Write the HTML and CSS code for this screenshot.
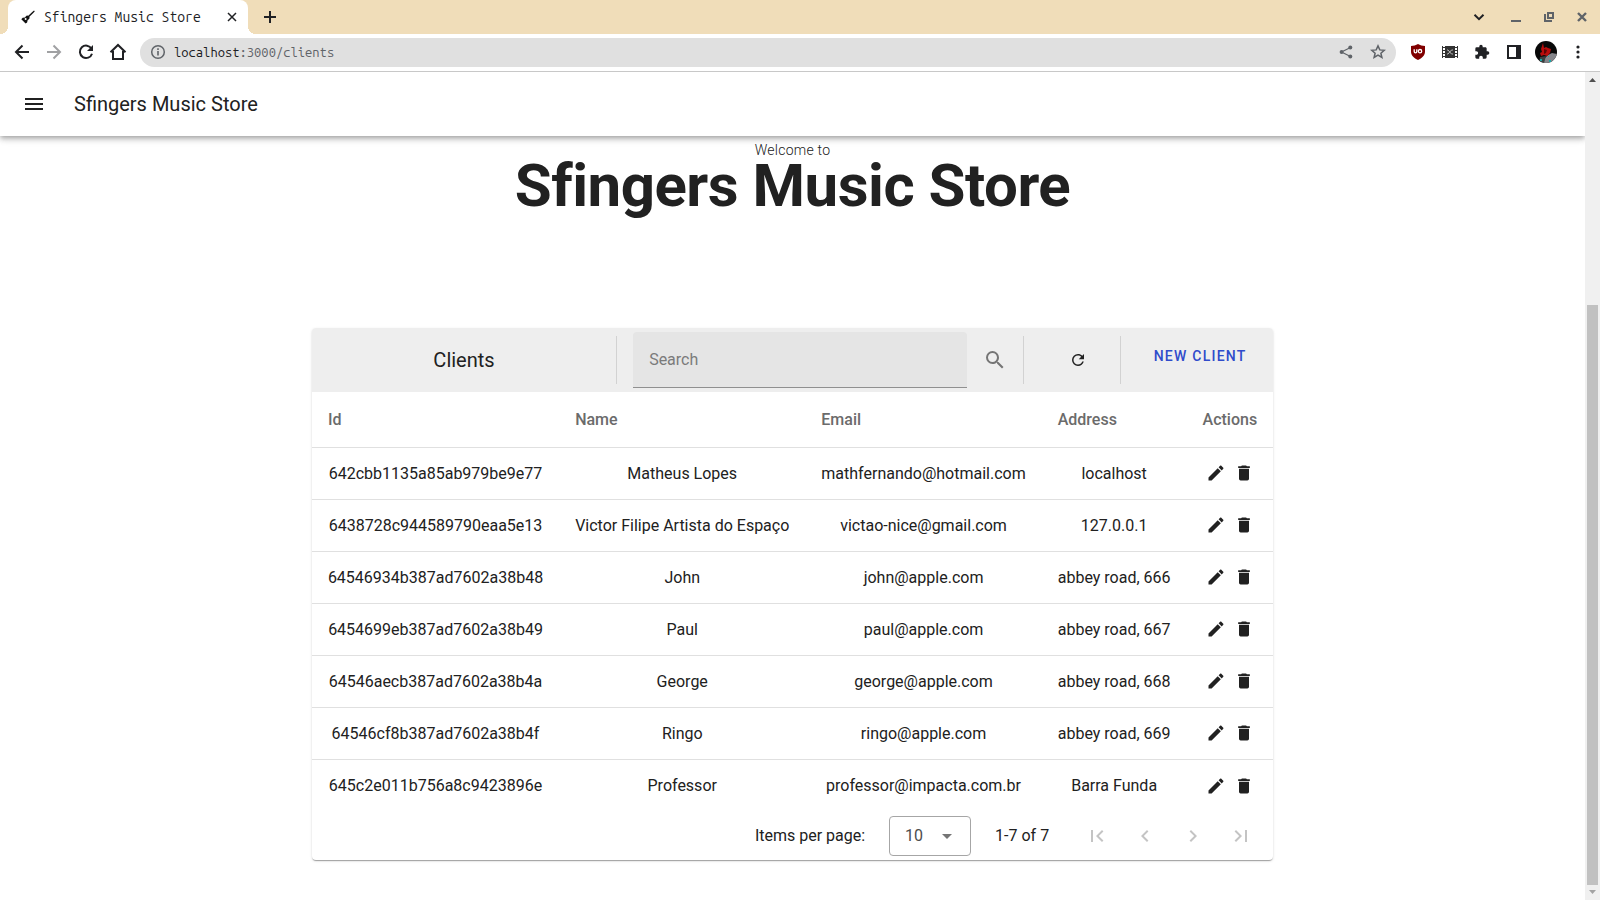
FILE: index.html
```html
<!DOCTYPE html>
<html lang="en">
<head>
<meta charset="utf-8">
<title>Sfingers Music Store</title>
<link rel="stylesheet" href="styles.css">
</head>
<body>
<svg class="sprite" aria-hidden="true">
  <symbol id="i-pencil" viewBox="0 0 24 24"><path d="M20.71,7.04C21.1,6.65 21.1,6 20.71,5.63L18.37,3.29C18,2.9 17.35,2.9 16.96,3.29L15.12,5.12L18.87,8.87M3,17.25V21H6.75L17.81,9.93L14.06,6.18L3,17.25Z"/></symbol>
  <symbol id="i-delete" viewBox="0 0 24 24"><path d="M19,4H15.5L14.5,3H9.5L8.5,4H5V6H19M6,19A2,2 0 0,0 8,21H16A2,2 0 0,0 18,19V7H6V19Z"/></symbol>
  <symbol id="i-refresh" viewBox="0 0 24 24"><path d="M17.65,6.35C16.2,4.9 14.21,4 12,4A8,8 0 0,0 4,12A8,8 0 0,0 12,20C15.73,20 18.84,17.45 19.73,14H17.65C16.83,16.33 14.61,18 12,18A6,6 0 0,1 6,12A6,6 0 0,1 12,6C13.66,6 15.14,6.69 16.22,7.78L13,11H20V4L17.65,6.35Z"/></symbol>
</svg>

<header class="browser">
  <div class="tabstrip">
    <div class="tab">
      <svg class="favicon" viewBox="0 0 14 14"><path d="M13 .4l.8.8-1.3 1.5-4.1 4 .2 1.5-1 1.2-.9.5-.6 2.5-1.5 1.2L.3 9.3l1.4-1.5 2.4-.4.6-1 1.2-.9 1.4.2 4.2-4z"/><circle cx="4.6" cy="9" r="1" fill="#fff"/></svg>
      <span class="tab-title">Sfingers Music Store</span>
      <button class="chrome-btn tab-close" aria-label="Close tab"><svg width="10" height="10" viewBox="0 0 10 10"><path class="line" d="M1 1l8 8M9 1L1 9"/></svg></button>
    </div>
    <button class="chrome-btn tab-new" aria-label="New tab"><svg width="12" height="12" viewBox="0 0 12 12"><path class="line thick" d="M6 0v12M0 6h12"/></svg></button>
    <div class="window-controls">
      <button class="chrome-btn tab-search" aria-label="Search tabs"><svg width="12" height="12" viewBox="0 0 12 12"><path class="line thick" d="M1.500 3.800L6 8.200l4.500-4.400"/></svg></button>
      <button class="chrome-btn dim" aria-label="Minimize"><svg width="12" height="12" viewBox="0 0 12 12"><path d="M1 9h10v2H1z"/></svg></button>
      <button class="chrome-btn dim" aria-label="Restore"><svg width="12" height="12" viewBox="0 0 12 12"><path fill-rule="evenodd" d="M4 1h7v7H4zM6 3v3h3V3zM1 3h2v6h6v2H1z"/></svg></button>
      <button class="chrome-btn dim" aria-label="Close window"><svg width="12" height="12" viewBox="0 0 12 12"><path class="line heavy" d="M2 2l8 8M10 2l-8 8"/></svg></button>
    </div>
  </div>
  <div class="navbar">
    <button class="chrome-btn" aria-label="Back"><svg width="16" height="16" viewBox="0 0 16 16"><path class="line thick" d="M15 8H2M8.500 1.500L2 8l6.500 6.500"/></svg></button>
    <button class="chrome-btn faded" aria-label="Forward"><svg width="16" height="16" viewBox="0 0 16 16"><path class="line thick" d="M1 8h13M7.500 1.500L14 8l-6.500 6.500"/></svg></button>
    <button class="chrome-btn" aria-label="Reload"><svg width="16" height="16" viewBox="0 0 16 16"><path class="line thick" d="M13.500 4.800A6.200 6.200 0 1 0 14 9.700"/><path d="M15 1v6H9z"/></svg></button>
    <button class="chrome-btn" aria-label="Home"><svg width="18" height="18" viewBox="0 0 18 18"><path class="line thick" d="M1.500 9.300L9 2l7.500 7.300M4 8v8h10V8"/></svg></button>
    <div class="omnibox">
      <svg class="info" width="16" height="16" viewBox="0 0 16 16"><circle class="line" cx="8" cy="8" r="6.300"/><path d="M7.200 7h1.600v4.500H7.200zM7.200 4.300h1.600v1.600H7.200z"/></svg>
      <div class="url"><b>localhost</b>:3000/clients</div>
      <button class="chrome-btn dim" aria-label="Share"><svg width="14" height="14" viewBox="0 0 14 14"><path class="line thin" d="M11.500 2.500L2.500 7l9 4.500"/><circle cx="11.300" cy="2.500" r="2"/><circle cx="2.600" cy="7" r="2"/><circle cx="11.300" cy="11.500" r="2"/></svg></button>
      <button class="chrome-btn dim" aria-label="Bookmark"><svg width="16" height="16" viewBox="0 0 16 16"><path class="line" d="M8 1.900l1.800 4 4.400.4-3.300 2.900 1 4.300L8 11.200l-3.900 2.300 1-4.300-3.300-2.900 4.400-.4z"/></svg></button>
    </div>
    <button class="chrome-btn" aria-label="Ad blocker"><svg width="16" height="16" viewBox="0 0 16 16"><path fill="#800000" d="M8 0c2 1.300 4.500 2 7 2v5.500c0 4-3 6.500-7 8.500-4-2-7-4.500-7-8.500V2c2.500 0 5-.7 7-2z"/><path fill="none" stroke="#fff" stroke-width="1.300" d="M4.200 5.200v2.400a1.300 1.300 0 0 0 2.600 0V5.200"/><circle cx="10" cy="7.200" r="1.700" fill="none" stroke="#fff" stroke-width="1.300"/></svg></button>
    <button class="chrome-btn" aria-label="Video extension"><svg width="16" height="14" viewBox="0 0 16 14"><path fill="#333" d="M3 1h10v12H3z"/><path fill="none" stroke="#333" d="M.5 1v12M15.500 1v12M0 2.500h3M0 5.500h3M0 8.500h3M0 11.500h3M13 2.500h3M13 5.500h3M13 8.500h3M13 11.500h3"/><path fill="none" stroke="#bbb" d="M5 5h1l3.500 4H11M5 9h1l3.500-4H11"/></svg></button>
    <button class="chrome-btn" aria-label="Extensions"><svg width="16" height="16" viewBox="0 0 24 24"><path d="M20.500,11H19V7C19,5.890 18.100,5 17,5H13V3.500A2.500,2.500 0 0,0 10.500,1A2.500,2.500 0 0,0 8,3.500V5H4A2,2 0 0,0 2,7V10.800H3.500C5,10.800 6.200,12 6.200,13.500C6.200,15 5,16.200 3.500,16.200H2V20A2,2 0 0,0 4,22H7.800V20.500C7.800,19 9,17.800 10.500,17.800C12,17.800 13.200,19 13.200,20.500V22H17A2,2 0 0,0 19,20V16H20.500A2.500,2.500 0 0,0 23,13.500A2.500,2.500 0 0,0 20.500,11Z"/></svg></button>
    <button class="chrome-btn" aria-label="Side panel"><svg width="14" height="14" viewBox="0 0 14 14"><path fill-rule="evenodd" d="M0 0h14v14H0zM2 2v10h7V2z"/></svg></button>
    <button class="chrome-btn" aria-label="Profile"><svg width="22" height="22" viewBox="0 0 22 22"><clipPath id="disc"><circle cx="11" cy="11" r="11"/></clipPath><g clip-path="url(#disc)"><path fill="#080808" d="M0 0h22v22H0z"/><path fill="#85858a" d="M13 14l4-2 5 1v9H8l2-5z"/><path fill="#3a3f40" d="M5 16l6-1-2 7H4z"/><path fill="#b80c0c" d="M8 2l1 5 2-1 2 1 3 1-1 4-3 3-3-1-3 1-1-3 2-1-1-3z"/><path fill="#5c0505" d="M9 8l3 1-1 3-2 1z"/><path fill="#19a7a7" d="M5 18h2v2H5zM14 19h2v2h-2zM13 15h1v1h-1z"/></g></svg></button>
    <button class="chrome-btn" aria-label="Menu"><svg width="4" height="14" viewBox="0 0 4 14"><circle cx="2" cy="2" r="1.600"/><circle cx="2" cy="7" r="1.600"/><circle cx="2" cy="12" r="1.600"/></svg></button>
  </div>
</header>

<div class="viewport">
  <div class="page">
    <header class="appbar">
      <button class="icon-btn" aria-label="Open menu"><svg class="icon-24" viewBox="0 0 24 24"><path d="M3,6H21V8H3V6M3,11H21V13H3V11M3,16H21V18H3V16Z"/></svg></button>
      <div class="appbar-title">Sfingers Music Store</div>
    </header>
    <main class="content">
      <p class="welcome">Welcome to</p>
      <h1 class="headline">Sfingers Music Store</h1>

      <section class="card">
        <div class="toolbar">
          <h2 class="toolbar-title">Clients</h2>
          <input class="search" type="text" placeholder="Search" aria-label="Search">
          <button class="icon-btn search-btn" aria-label="Search clients"><svg class="icon-24" viewBox="0 0 24 24"><path d="M9.500,3A6.500,6.500 0 0,1 16,9.500C16,11.110 15.410,12.590 14.440,13.730L14.710,14H15.500L20.500,19L19,20.500L14,15.500V14.710L13.730,14.440C12.590,15.410 11.110,16 9.500,16A6.500,6.500 0 0,1 3,9.500A6.500,6.500 0 0,1 9.500,3M9.500,5C7,5 5,7 5,9.500C5,12 7,14 9.500,14C12,14 14,12 14,9.500C14,7 12,5 9.500,5Z"/></svg></button>
          <button class="icon-btn refresh-btn" aria-label="Refresh"><svg class="icon-18"><use href="#i-refresh"/></svg></button>
          <button class="new-client">NEW CLIENT</button>
        </div>
        <table class="clients">
          <thead>
            <tr><th>Id</th><th>Name</th><th>Email</th><th>Address</th><th>Actions</th></tr>
          </thead>
          <tbody>
            <tr><td>642cbb1135a85ab979be9e77</td><td>Matheus Lopes</td><td>mathfernando@hotmail.com</td><td>localhost</td><td><div class="actions"><button class="icon-btn" aria-label="Edit"><svg class="icon-20"><use href="#i-pencil"/></svg></button><button class="icon-btn" aria-label="Delete"><svg class="icon-20"><use href="#i-delete"/></svg></button></div></td></tr>
            <tr><td>6438728c944589790eaa5e13</td><td>Victor Filipe Artista do Espaço</td><td>victao-nice@gmail.com</td><td>127.0.0.1</td><td><div class="actions"><button class="icon-btn" aria-label="Edit"><svg class="icon-20"><use href="#i-pencil"/></svg></button><button class="icon-btn" aria-label="Delete"><svg class="icon-20"><use href="#i-delete"/></svg></button></div></td></tr>
            <tr><td>64546934b387ad7602a38b48</td><td>John</td><td>john@apple.com</td><td>abbey road, 666</td><td><div class="actions"><button class="icon-btn" aria-label="Edit"><svg class="icon-20"><use href="#i-pencil"/></svg></button><button class="icon-btn" aria-label="Delete"><svg class="icon-20"><use href="#i-delete"/></svg></button></div></td></tr>
            <tr><td>6454699eb387ad7602a38b49</td><td>Paul</td><td>paul@apple.com</td><td>abbey road, 667</td><td><div class="actions"><button class="icon-btn" aria-label="Edit"><svg class="icon-20"><use href="#i-pencil"/></svg></button><button class="icon-btn" aria-label="Delete"><svg class="icon-20"><use href="#i-delete"/></svg></button></div></td></tr>
            <tr><td>64546aecb387ad7602a38b4a</td><td>George</td><td>george@apple.com</td><td>abbey road, 668</td><td><div class="actions"><button class="icon-btn" aria-label="Edit"><svg class="icon-20"><use href="#i-pencil"/></svg></button><button class="icon-btn" aria-label="Delete"><svg class="icon-20"><use href="#i-delete"/></svg></button></div></td></tr>
            <tr><td>64546cf8b387ad7602a38b4f</td><td>Ringo</td><td>ringo@apple.com</td><td>abbey road, 669</td><td><div class="actions"><button class="icon-btn" aria-label="Edit"><svg class="icon-20"><use href="#i-pencil"/></svg></button><button class="icon-btn" aria-label="Delete"><svg class="icon-20"><use href="#i-delete"/></svg></button></div></td></tr>
            <tr><td>645c2e011b756a8c9423896e</td><td>Professor</td><td>professor@impacta.com.br</td><td>Barra Funda</td><td><div class="actions"><button class="icon-btn" aria-label="Edit"><svg class="icon-20"><use href="#i-pencil"/></svg></button><button class="icon-btn" aria-label="Delete"><svg class="icon-20"><use href="#i-delete"/></svg></button></div></td></tr>
          </tbody>
        </table>
        <footer class="pager">
          <label for="per-page">Items per page:</label>
          <div class="select">
            <select id="per-page"><option>10</option></select>
            <svg class="icon-24 caret" viewBox="0 0 24 24"><path d="M7,10L12,15L17,10H7Z"/></svg>
          </div>
          <span class="range">1-7 of 7</span>
          <button class="icon-btn page-btn" disabled aria-label="First page"><svg class="icon-24" viewBox="0 0 24 24"><path d="M18.410,16.590L13.820,12L18.410,7.410L17,6L11,12L17,18L18.410,16.590M6,6H8V18H6V6Z"/></svg></button>
          <button class="icon-btn page-btn" disabled aria-label="Previous page"><svg class="icon-24" viewBox="0 0 24 24"><path d="M15.410,16.580L10.830,12L15.410,7.410L14,6L8,12L14,18L15.410,16.580Z"/></svg></button>
          <button class="icon-btn page-btn" disabled aria-label="Next page"><svg class="icon-24" viewBox="0 0 24 24"><path d="M8.590,16.580L13.170,12L8.590,7.410L10,6L16,12L10,18L8.590,16.580Z"/></svg></button>
          <button class="icon-btn page-btn" disabled aria-label="Last page"><svg class="icon-24" viewBox="0 0 24 24"><path d="M5.590,7.410L10.180,12L5.590,16.590L7,18L13,12L7,6L5.590,7.410M16,6H18V18H16V6Z"/></svg></button>
        </footer>
      </section>
    </main>
  </div>
  <div class="scrollbar" aria-hidden="true">
    <svg width="15" height="15" viewBox="0 0 15 15"><path fill="#505050" d="M4 10l3.500-4 3.500 4z"/></svg>
    <div class="track"><div class="gap"></div><div class="thumb"></div></div>
    <svg width="15" height="15" viewBox="0 0 15 15"><path fill="#a3a3a3" d="M4 5l3.500 4L11 5z"/></svg>
  </div>
</div>
</body>
</html>
```
FILE: styles.css
```css
* { box-sizing: border-box; }

body {
  margin: 0;
  height: 100vh;
  display: flex;
  flex-direction: column;
  overflow: hidden;
  background: #fff;
  color: #212121;
  font-family: Roboto, "Liberation Sans", sans-serif;
  font-size: 16px;
  line-height: 24px;
}

button, input, select { font: inherit; color: inherit; }
svg { display: block; fill: currentColor; flex: none; }
.sprite { position: absolute; width: 0; height: 0; }
.icon-18 { width: 18px; height: 18px; }
.icon-20 { width: 20px; height: 20px; }
.icon-24 { width: 24px; height: 24px; }

.icon-btn, .chrome-btn {
  display: flex;
  align-items: center;
  justify-content: center;
  padding: 0;
  border: 0;
  background: none;
}

/* Browser frame */
.browser {
  flex: none;
  color: #202124;
  font-family: "Ubuntu Mono", "DejaVu Sans Mono", monospace;
}
.line { fill: none; stroke: currentColor; stroke-width: 1.5; }
.thin { stroke-width: 1.2; }
.thick { stroke-width: 2; }
.heavy { stroke-width: 2.4; }
.dim { color: #5f6368; }
.faded { color: #a0a1a3; }

.tabstrip {
  display: flex;
  height: 34px;
  padding-left: 8px;
  background: #f0ddb9;
}
.tab {
  position: relative;
  display: flex;
  align-items: center;
  width: 240px;
  padding: 0 8px 0 13px;
  border-radius: 8px 8px 0 0;
  background: #fff;
  font-size: 14px;
}
.tab::before, .tab::after {
  content: "";
  position: absolute;
  bottom: 0;
  width: 8px;
  height: 8px;
}
.tab::before { left: -8px; background: radial-gradient(circle at 0 0, #f0ddb9 8px, #fff 8px); }
.tab::after { right: -8px; background: radial-gradient(circle at 100% 0, #f0ddb9 8px, #fff 8px); }
.favicon { width: 14px; height: 14px; margin-right: 9px; fill: #111; }
.tab-title { flex: 1; white-space: nowrap; }
.tab-close { width: 16px; height: 16px; }
.tab-new { width: 28px; margin-left: 8px; }
.window-controls { display: flex; gap: 8px; margin-left: auto; padding-right: 6px; }
.window-controls .chrome-btn { width: 25px; }
.window-controls .tab-search { margin-right: 4px; }

.navbar {
  display: flex;
  align-items: center;
  height: 38px;
  padding: 0 6px;
  border-bottom: 1px solid #c8c8c8;
}
.navbar > .chrome-btn { width: 32px; height: 32px; margin-bottom: 1px; }
.omnibox {
  flex: 1;
  display: flex;
  align-items: center;
  height: 29px;
  margin: 0 6px;
  padding: 0 2px 1px 10px;
  border-radius: 15px;
  background: #e0e0e0;
  color: #5f6368;
  font-size: 13px;
}
.omnibox .chrome-btn { width: 32px; height: 28px; }
.url { flex: 1; margin-left: 8px; }
.url b { font-weight: 400; color: #202124; }

/* Page area */
.viewport { flex: 1; display: flex; min-height: 0; }
.page { flex: 1; min-width: 0; overflow: hidden; }

.scrollbar {
  display: flex;
  flex-direction: column;
  width: 15px;
  background: #f0f0f0;
}
.track { flex: 1; display: flex; flex-direction: column; padding: 0 2px; }
.gap { flex: 218; }
.thumb { flex: 580; background: #c1c1c1; }

.appbar {
  display: flex;
  align-items: center;
  height: 64px;
  padding-left: 10px;
  box-shadow: 0 2px 4px -1px rgba(0,0,0,.2), 0 4px 5px 0 rgba(0,0,0,.14), 0 1px 10px 0 rgba(0,0,0,.12);
}
.appbar .icon-btn { width: 48px; height: 48px; }
.appbar-title { margin-left: 16px; font-size: 20px; }

.content { padding-top: 6px; text-align: center; }
.welcome { margin: 0; font-size: 14px; font-weight: 300; line-height: 16px; letter-spacing: .0178em; }
.headline { margin: 0 0 114px; font-size: 60px; font-weight: 700; line-height: 56px; letter-spacing: -.0083em; }

.card {
  width: max-content;
  margin: 0 auto;
  border-radius: 4px;
  background: #fff;
  box-shadow: 0 2px 1px -1px rgba(0,0,0,.2), 0 1px 1px 0 rgba(0,0,0,.14), 0 1px 3px 0 rgba(0,0,0,.12);
}

.toolbar {
  display: flex;
  align-items: center;
  height: 64px;
  border-radius: 4px 4px 0 0;
  background: #eee;
}
.toolbar-title {
  flex: 1;
  height: 48px;
  margin: 0;
  border-right: 1px solid #d2d2d2;
  font-size: 20px;
  font-weight: 400;
  line-height: 48px;
}
.search {
  width: 334px;
  height: 56px;
  margin-left: 16px;
  padding: 0 16px;
  border: 0;
  border-bottom: 1px solid #909090;
  border-radius: 4px 4px 0 0;
  background: #e5e5e5;
}
.search::placeholder { color: #7b7b7b; opacity: 1; }
.search-btn { width: 57px; height: 48px; border-right: 1px solid #d2d2d2; color: #757575; }
.refresh-btn { width: 97px; height: 48px; padding-left: 12px; border-right: 1px solid #d2d2d2; }
.new-client {
  width: 152px;
  height: 48px;
  padding: 0 0 8px 6px;
  border: 0;
  background: none;
  color: #304bcb;
  font-size: 14px;
  font-weight: 500;
  letter-spacing: .0893em;
}

.clients { width: 100%; border-spacing: 0; }
.clients th, .clients td { padding: 0 16px; border-bottom: 1px solid #e0e0e0; }
.clients th { height: 56px; color: #6b6b6b; font-weight: 500; text-align: left; }
.clients td { height: 52px; }
.clients tr:last-child td { border-bottom: 0; }
.clients td:last-child { padding-bottom: 1px; }
.clients tr:last-child td:last-child { padding-bottom: 0; }
.actions { display: flex; justify-content: center; gap: 8px; }

.pager {
  display: flex;
  align-items: center;
  justify-content: flex-end;
  height: 48px;
  padding: 0 8px 0 0;
}
.select {
  position: relative;
  width: 82px;
  height: 40px;
  margin: 0 24px;
}
.select select {
  width: 100%;
  height: 100%;
  padding: 0 15px;
  border: 1px solid #a6a6a6;
  border-radius: 4px;
  appearance: none;
  background: none;
  color: #4d4d4d;
}
.caret { position: absolute; right: 12px; top: 8px; color: #757575; pointer-events: none; }
.range { margin-right: 24px; }
.page-btn { width: 48px; height: 48px; color: #c4c4c4; }
```
